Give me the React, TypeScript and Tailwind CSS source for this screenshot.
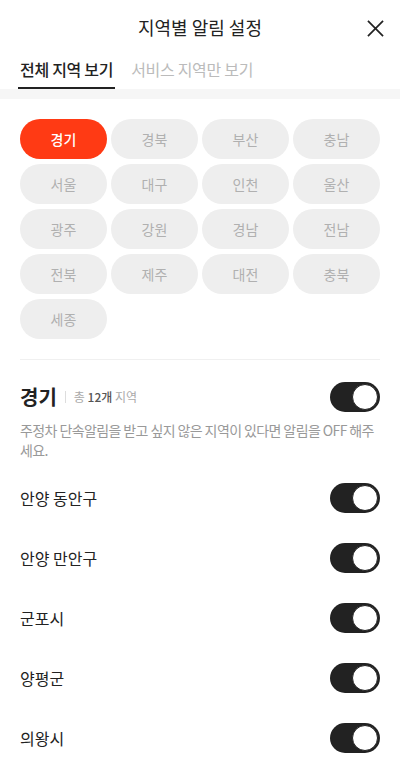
const regions = [
  "경기", "경북", "부산", "충남",
  "서울", "대구", "인천", "울산",
  "광주", "강원", "경남", "전남",
  "전북", "제주", "대전", "충북",
  "세종",
];

const districts = ["안양 동안구", "안양 만안구", "군포시", "양평군", "의왕시"];

function Toggle() {
  return (
    <div className="w-[50px] h-[30px] rounded-full bg-[#222222] flex items-center justify-end px-[2px] shrink-0">
      <div className="w-[26px] h-[26px] rounded-full bg-white border-[1.5px] border-[#222222]" />
    </div>
  );
}

export default function App() {
  return (
    <div
      className="w-[400px] min-h-[777px] bg-white text-[#222222] overflow-hidden"
      style={{ fontFamily: '"Noto Sans CJK KR", "Noto Sans", sans-serif' }}
    >
      {/* Header */}
      <header className="relative h-[54px] flex items-center justify-center">
        <h1 className="text-[18px] leading-none text-[#222222]">지역별 알림 설정</h1>
        <button className="absolute right-[15px] top-[18px] w-[20px] h-[20px] flex items-center justify-center">
          <svg width="17" height="17" viewBox="0 0 18 18" fill="none" stroke="#222" strokeWidth="1.8">
            <path d="M1 1L17 17M17 1L1 17" />
          </svg>
        </button>
      </header>

      {/* Tabs */}
      <nav className="flex items-end px-[18px] h-[35px] gap-[16px]">
        <div className="h-full flex flex-col justify-between">
          <span className="text-[16px] leading-[20px] text-[#222222] pt-[5px] font-medium px-[2px] tracking-[-0.3px]">
            전체 지역 보기
          </span>
          <div className="h-[2px] bg-[#222222]" />
        </div>
        <div className="h-full flex flex-col">
          <span className="text-[16px] leading-[20px] text-[#bbbbbb] pt-[5px] tracking-[-0.3px]">서비스 지역만 보기</span>
        </div>
      </nav>
      <div className="h-[10px] bg-[#f6f6f6]" />

      {/* Region chips */}
      <section className="px-5 pt-[20px]">
        <div className="grid grid-cols-4 gap-x-[4px] gap-y-[5px]">
          {regions.map((r, i) => (
            <div
              key={r}
              className={
                i === 0
                  ? "h-[40px] rounded-full bg-[#ff3a14] text-white text-[14px] font-medium flex items-center justify-center"
                  : "h-[40px] rounded-full bg-[#eeeeee] text-[#b0b0b0] text-[14px] flex items-center justify-center"
              }
            >
              {r}
            </div>
          ))}
        </div>
        <div className="mt-[20px] h-px bg-[#f0f0f0]" />
      </section>

      {/* Selected region */}
      <section className="px-5 pt-[22px]">
        <div className="flex items-center justify-between">
          <div className="flex items-center">
            <span className="text-[20px] font-bold leading-none">경기</span>
            <span className="mx-[8px] w-px h-[12px] bg-[#dddddd]" />
            <span className="text-[12px] text-[#aaaaaa]">
              총 <span className="text-[#555555] font-medium">12개</span> 지역
            </span>
          </div>
          <Toggle />
        </div>
        <p className="mt-[8px] text-[14px] leading-[20px] text-[#999999] tracking-[-0.6px]">
          주정차 단속알림을 받고 싶지 않은 지역이 있다면 알림을 OFF 해주세요.
        </p>

        <ul className="mt-[8px]">
          {districts.map((d) => (
            <li key={d} className="h-[60px] flex items-center justify-between">
              <span className="text-[16px] text-[#222222]">{d}</span>
              <Toggle />
            </li>
          ))}
        </ul>
      </section>
    </div>
  );
}
